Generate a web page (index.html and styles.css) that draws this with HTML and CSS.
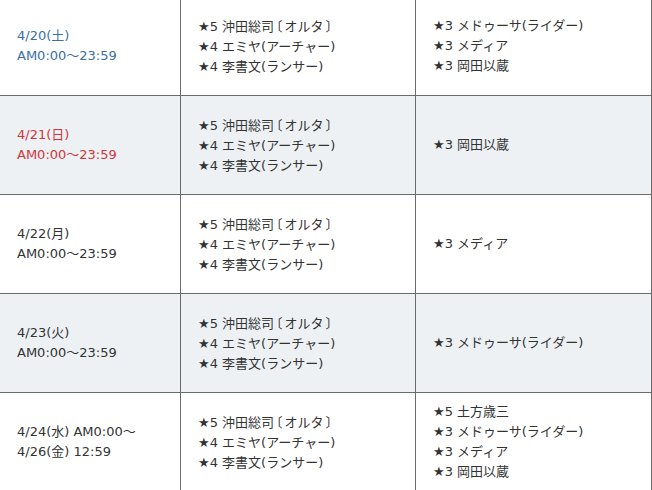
FILE: index.html
```html
<!DOCTYPE html>
<html lang="ja">
<head>
<meta charset="utf-8">
<link rel="stylesheet" href="styles.css">
</head>
<body>
<table class="sched">
  <colgroup><col class="c1"><col class="c2"><col class="c3"></colgroup>
  <tbody>
    <tr>
      <td class="date sat">4/20(土)<br>AM0:00～23:59</td>
      <td>★5 沖田総司<span class="br">〔</span>オルタ<span class="br">〕</span><br>★4 エミヤ(アーチャー)<br>★4 李書文(ランサー)</td>
      <td>★3 メドゥーサ(ライダー)<br>★3 メディア<br>★3 岡田以蔵</td>
    </tr>
    <tr class="alt">
      <td class="date sun">4/21(日)<br>AM0:00～23:59</td>
      <td>★5 沖田総司<span class="br">〔</span>オルタ<span class="br">〕</span><br>★4 エミヤ(アーチャー)<br>★4 李書文(ランサー)</td>
      <td>★3 岡田以蔵</td>
    </tr>
    <tr>
      <td class="date">4/22(月)<br>AM0:00～23:59</td>
      <td>★5 沖田総司<span class="br">〔</span>オルタ<span class="br">〕</span><br>★4 エミヤ(アーチャー)<br>★4 李書文(ランサー)</td>
      <td>★3 メディア</td>
    </tr>
    <tr class="alt">
      <td class="date">4/23(火)<br>AM0:00～23:59</td>
      <td>★5 沖田総司<span class="br">〔</span>オルタ<span class="br">〕</span><br>★4 エミヤ(アーチャー)<br>★4 李書文(ランサー)</td>
      <td>★3 メドゥーサ(ライダー)</td>
    </tr>
    <tr>
      <td class="date">4/24(水) AM0:00～<br>4/26(金) 12:59</td>
      <td>★5 沖田総司<span class="br">〔</span>オルタ<span class="br">〕</span><br>★4 エミヤ(アーチャー)<br>★4 李書文(ランサー)</td>
      <td>★5 土方歳三<br>★3 メドゥーサ(ライダー)<br>★3 メディア<br>★3 岡田以蔵</td>
    </tr>
  </tbody>
</table>
</body>
</html>
```
FILE: styles.css
```css
html, body {
  margin: 0;
  padding: 0;
  background: #fff;
}
body {
  font-family: "DejaVu Sans", "Noto Sans CJK JP", sans-serif;
  font-size: 13px;
  line-height: 20px;
  color: #333;
  overflow: hidden;
}
.sched {
  border-collapse: collapse;
  table-layout: fixed;
  width: 653px;
  margin: -4px 0 0 -1px;
}
.c1 { width: 181px; }
.c2 { width: 235px; }
.c3 { width: 236px; }
.sched td {
  border: 1px solid #6b6b6b;
  padding: 8px 16px 8px 17px;
  height: 82px;
  vertical-align: middle;
  white-space: nowrap;
}
.sched tr.alt td {
  background: #edf1f4;
}
.br {
  font-family: "Noto Sans CJK JP", sans-serif;
  font-feature-settings: "halt";
  margin: 0 2px;
}
.sat { color: #3b6fa6; }
.sun { color: #d2353b; }
```
